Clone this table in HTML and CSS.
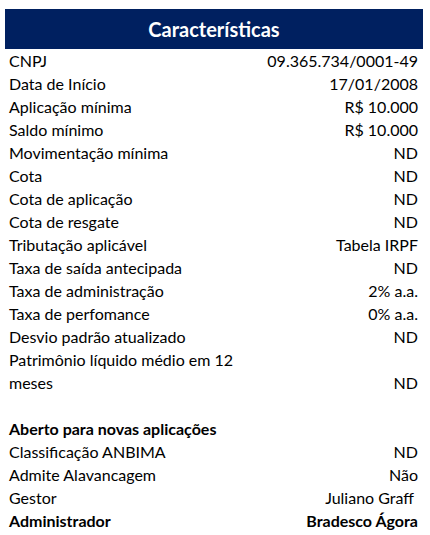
FILE: index.html
```html
<!DOCTYPE html>
<html lang="pt-BR">
<head>
<meta charset="utf-8">
<link rel="stylesheet" href="styles.css">
</head>
<body>
<div class="card">
  <div class="header">Características</div>
  <div class="row"><span>CNPJ</span><span>09.365.734/0001-49</span></div>
  <div class="row"><span>Data de Início</span><span>17/01/2008</span></div>
  <div class="row"><span>Aplicação mínima</span><span>R$ 10.000</span></div>
  <div class="row"><span>Saldo mínimo</span><span>R$ 10.000</span></div>
  <div class="row"><span>Movimentação mínima</span><span>ND</span></div>
  <div class="row"><span>Cota</span><span>ND</span></div>
  <div class="row"><span>Cota de aplicação</span><span>ND</span></div>
  <div class="row"><span>Cota de resgate</span><span>ND</span></div>
  <div class="row"><span>Tributação aplicável</span><span>Tabela IRPF</span></div>
  <div class="row"><span>Taxa de saída antecipada</span><span>ND</span></div>
  <div class="row"><span>Taxa de administração</span><span>2% a.a.</span></div>
  <div class="row"><span>Taxa de perfomance</span><span>0% a.a.</span></div>
  <div class="row"><span>Desvio padrão atualizado</span><span>ND</span></div>
  <div class="row tall"><span>Patrimônio líquido médio em 12<br>meses</span><span class="bottom">ND</span></div>
  <div class="row empty"></div>
  <div class="row bold"><span>Aberto para novas aplicações</span><span></span></div>
  <div class="row"><span>Classificação ANBIMA</span><span>ND</span></div>
  <div class="row"><span>Admite Alavancagem</span><span>Não</span></div>
  <div class="row"><span>Gestor</span><span class="gap">Juliano Graff</span></div>
  <div class="row bold"><span>Administrador</span><span>Bradesco Ágora</span></div>
</div>
</body>
</html>
```
FILE: styles.css
```css
html, body {
  margin: 0;
  padding: 0;
  background: #ffffff;
}
body {
  font-family: Lato, "Open Sans", sans-serif;
  color: #000000;
}
.card {
  margin: 9px 0 0 5px;
  width: 418px;
}
.header {
  background: #002060;
  color: #ffffff;
  height: 40px;
  line-height: 40px;
  text-align: center;
  font-weight: bold;
  font-size: 20px;
}
.row {
  display: flex;
  justify-content: space-between;
  align-items: flex-start;
  padding: 0 5px 0 4px;
  font-size: 16px;
  line-height: 23px;
  min-height: 23px;
}
.row .bottom {
  align-self: flex-end;
}
.row .gap {
  padding-right: 4px;
}
.bold {
  font-weight: bold;
}
```
